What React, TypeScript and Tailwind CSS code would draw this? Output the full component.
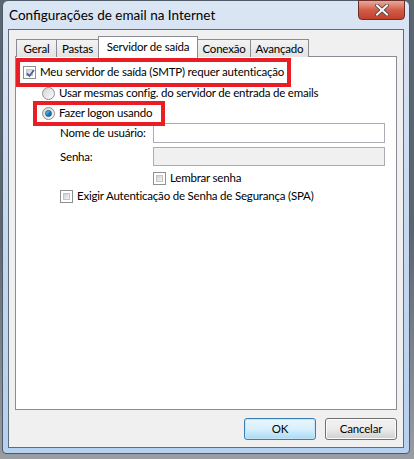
import React from "react";

const font = { fontFamily: 'Lato, "Noto Sans", sans-serif' };

function Check({ checked = false }: { checked?: boolean }) {
  return (
    <div className="w-[13px] h-[13px] shrink-0 border border-[#8e8f8f] bg-white p-[2px]">
      <div className="w-full h-full border border-[#c4c4c4] bg-gradient-to-br from-[#cbcfd5] to-[#f6f6f6] relative">
        {checked && (
          <svg viewBox="0 0 9 9" className="absolute -left-[1px] -top-[1px] w-[9px] h-[9px]">
            <path d="M1 4.5 L3.5 7 L8 1" stroke="#4a5f97" strokeWidth="1.8" fill="none" />
          </svg>
        )}
      </div>
    </div>
  );
}

function Radio({ checked = false }: { checked?: boolean }) {
  return (
    <div className="w-[13px] h-[13px] shrink-0 rounded-full border border-[#8e8f8f] bg-gradient-to-br from-[#d4d6d9] to-[#fafafa] flex items-center justify-center">
      {checked && (
        <div className="w-[7px] h-[7px] rounded-full bg-gradient-to-br from-[#8ad3f4] via-[#1d87c9] to-[#0a4f8a] border border-[#1b5e8d]" />
      )}
    </div>
  );
}

function Tab({ label, w }: { label: string; w: string }) {
  return (
    <div className={`${w} h-[18px] mt-[3px] border border-b-0 border-[#898c95] bg-gradient-to-b from-[#f3f3f3] to-[#e3e3e3] flex items-center justify-center -mr-[1px] whitespace-nowrap`}>
      {label}
    </div>
  );
}

export default function App() {
  return (
    <div className="w-[414px] h-[459px] bg-gradient-to-b from-[#5b6673] via-[#5b6673] to-[#9a9da2] overflow-hidden whitespace-nowrap" style={font}>
      <div className="ml-[2px] w-[408px] h-[454px] rounded-t-[6px] rounded-b-[4px] bg-gradient-to-b from-[#dbe6f4] via-[#c6d8ee] to-[#b6d0ef] border border-[#4e5a66] flex flex-col relative">
        {/* close button */}
        <div className="absolute left-[355px] top-[-1px] w-[47px] h-[20px] rounded-b-[4px] border border-[#6d2f2a] bg-gradient-to-b from-[#e9a99b] via-[#d25c48] to-[#c0412e] flex items-center justify-center">
          <svg viewBox="0 0 14 12" className="w-[14px] h-[12px]">
            <path d="M2 1.5 L12 10.5 M12 1.5 L2 10.5" stroke="#3d3d3d" strokeWidth="3.6" strokeLinecap="square" />
            <path d="M2 1.5 L12 10.5 M12 1.5 L2 10.5" stroke="#ffffff" strokeWidth="2" strokeLinecap="square" />
          </svg>
        </div>
        <div className="h-[28px] flex items-center pl-[6px] text-[13.5px] text-black">
          Configurações de email na Internet
        </div>
        <div className="mx-[5px] mb-[5px] flex-1 border border-[#5e6b78] bg-[#f0f0f0] flex flex-col px-[6px] pt-[6px] pb-[7px] text-[11.5px] tracking-[-0.2px] text-black">
          {/* tabs */}
          <div className="flex pl-[1px] h-[21px] relative z-10">
            <Tab label="Geral" w="w-[41px]" />
            <Tab label="Pastas" w="w-[43px]" />
            <div className="w-[100px] h-[22px] -mr-[1px] border border-b-0 border-[#898c95] bg-white flex items-center justify-center pb-[1px]">
              Servidor de saída
            </div>
            <Tab label="Conexão" w="w-[54px]" />
            <Tab label="Avançado" w="w-[59px]" />
          </div>
          <div className="flex-1 -mt-[1px] border border-[#898c95] bg-white relative">
            {/* red annotation boxes */}
            <div className="absolute left-[0px] top-[1px] w-[275px] h-[29px] border-[4px] border-[#ea1c24]" />
            <div className="absolute left-[17px] top-[44px] w-[132px] h-[25px] border-[4px] border-[#ea1c24]" />

            <div className="flex flex-col pl-[7px] pt-[8px]">
              <div className="flex items-center gap-[4px] h-[14px]">
                <Check checked />
                <span>Meu servidor de saída (SMTP) requer autenticação</span>
              </div>
              <div className="flex items-center gap-[4px] h-[14px] mt-[7px] pl-[19px]">
                <Radio />
                <span>Usar mesmas config. do servidor de entrada de emails</span>
              </div>
              <div className="flex items-center gap-[4px] h-[14px] mt-[6px] pl-[19px]">
                <Radio checked />
                <span>Fazer logon usando</span>
              </div>
              <div className="flex items-center h-[20px] mt-[3px] pl-[37px]">
                <span className="w-[93px] shrink-0">Nome de usuário:</span>
                <div className="w-[232px] h-[20px] border border-[#abadb3] bg-white" />
              </div>
              <div className="flex items-center h-[19px] mt-[4px] pl-[37px]">
                <span className="w-[93px] shrink-0">Senha:</span>
                <div className="w-[232px] h-[19px] border border-[#abadb3] bg-[#f0f0f0]" />
              </div>
              <div className="flex items-center gap-[4px] h-[14px] mt-[5px] pl-[130px]">
                <Check />
                <span>Lembrar senha</span>
              </div>
              <div className="flex items-center gap-[4px] h-[14px] mt-[4px] pl-[37px]">
                <Check />
                <span>Exigir Autenticação de Senha de Segurança (SPA)</span>
              </div>
            </div>
          </div>
          <div className="flex justify-end gap-[9px] mt-[8px] pr-[0px] h-[22px]">
            <div className="w-[72px] h-[22px] rounded-[3px] border border-[#3c7fb1] bg-gradient-to-b from-[#eaf6fd] via-[#d9f0fc] to-[#a7d9f5] flex items-center justify-center shadow-[inset_0_0_0_1px_#c4e5f6]">
              OK
            </div>
            <div className="w-[72px] h-[22px] rounded-[3px] border border-[#707070] bg-gradient-to-b from-[#f2f2f2] via-[#ebebeb] to-[#cfcfcf] flex items-center justify-center shadow-[inset_0_0_0_1px_#fcfcfc]">
              Cancelar
            </div>
          </div>
        </div>
      </div>
    </div>
  );
}
